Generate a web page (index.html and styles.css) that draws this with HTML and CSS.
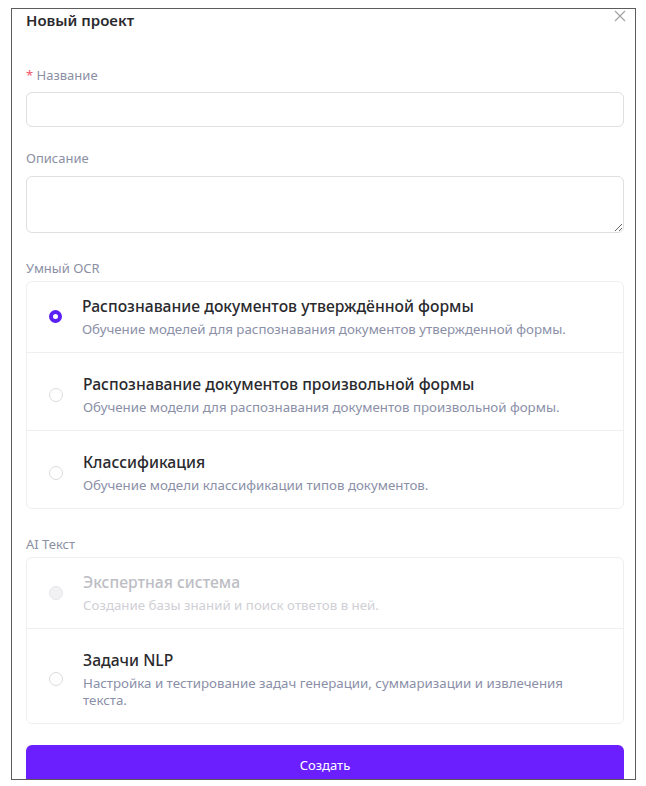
FILE: index.html
```html
<!DOCTYPE html>
<html lang="ru">
<head>
    <meta charset="UTF-8">
    <title>Новый проект</title>
    <link rel="stylesheet" href="styles.css">
</head>
<body>
    <div class="dialog">
        <h1 class="dialog-title">Новый проект</h1>
        <button class="close" type="button" aria-label="Закрыть">
            <svg width="12" height="12" viewBox="0 0 12 12"><path d="M1 1L11 11M11 1L1 11" stroke="#a3a3a3" stroke-width="1.2" fill="none"/></svg>
        </button>

        <div class="field field-name">
            <label class="field-label"><span class="req">*</span> Название</label>
            <input class="input" type="text">
        </div>
        <div class="field field-desc">
            <label class="field-label">Описание</label>
            <textarea class="input textarea"></textarea>
        </div>

        <div class="group">
            <div class="field-label">Умный OCR</div>
            <div class="options">
                <label class="option">
                    <span class="radio checked"></span>
                    <span class="option-text">
                        <span class="option-title">Распознавание документов утверждённой формы</span>
                        <span class="option-desc">Обучение моделей для распознавания документов утвержденной формы.</span>
                    </span>
                </label>
                <label class="option">
                    <span class="radio"></span>
                    <span class="option-text">
                        <span class="option-title">Распознавание документов произвольной формы</span>
                        <span class="option-desc">Обучение модели для распознавания документов произвольной формы.</span>
                    </span>
                </label>
                <label class="option">
                    <span class="radio"></span>
                    <span class="option-text">
                        <span class="option-title">Классификация</span>
                        <span class="option-desc">Обучение модели классификации типов документов.</span>
                    </span>
                </label>
            </div>
        </div>

        <div class="group">
            <div class="field-label">AI Текст</div>
            <div class="options">
                <label class="option disabled">
                    <span class="radio"></span>
                    <span class="option-text">
                        <span class="option-title">Экспертная система</span>
                        <span class="option-desc">Создание базы знаний и поиск ответов в ней.</span>
                    </span>
                </label>
                <label class="option">
                    <span class="radio"></span>
                    <span class="option-text">
                        <span class="option-title">Задачи NLP</span>
                        <span class="option-desc">Настройка и тестирование задач генерации, суммаризации и извлечения текста.</span>
                    </span>
                </label>
            </div>
        </div>

        <button class="create" type="button">Создать</button>
    </div>
</body>
</html>
```

FILE: styles.css
```css
body {
    margin: 0;
    background: #ffffff;
    font-family: "Noto Sans", "Open Sans", Arial, sans-serif;
    color: #2a2a2e;
}
.dialog {
    position: relative;
    box-sizing: border-box;
    width: 625px;
    height: 772px;
    margin: 8px 0 0 11px;
    padding: 0 11px 0 14px;
    border: 1px solid #5c5c5c;
    overflow: hidden;
}
.dialog-title {
    margin: 0;
    font-size: 15px;
    line-height: 22px;
    font-weight: 600;
    color: #2a2a2e;
}
.close {
    position: absolute;
    top: 1px;
    right: 9px;
    padding: 0;
    border: none;
    background: none;
    line-height: 0;
}
.field-label {
    display: block;
    font-size: 13px;
    line-height: 20px;
    color: #8b8fa3;
}
.req {
    color: #f0566a;
}
.field-name {
    margin-top: 34px;
}
.field-desc {
    margin-top: 21px;
}
.input {
    display: block;
    box-sizing: border-box;
    width: 100%;
    height: 35px;
    margin-top: 7px;
    border: 1px solid #dedee3;
    border-radius: 6px;
    font-family: inherit;
    font-size: 13px;
    outline: none;
}
.textarea {
    height: 57px;
    margin-top: 8px;
    resize: vertical;
}
.group {
    margin-top: 25px;
}
.options {
    margin-top: 3px;
    border: 1px solid #efeff2;
    border-radius: 6px;
}
.option {
    display: flex;
    align-items: center;
    gap: 20px;
    padding: 20px 30px 14px 22px;
    border-top: 1px solid #efeff2;
}
.option:first-child {
    padding-top: 13px;
    border-top: none;
}
.radio {
    flex: none;
    box-sizing: border-box;
    width: 14px;
    height: 14px;
    border: 1px solid #dcdce0;
    border-radius: 50%;
    background: #ffffff;
}
.radio.checked {
    width: 13px;
    height: 13px;
    border: 4px solid #5a1ff5;
}
.option-text {
    display: flex;
    flex-direction: column;
}
.option-title {
    font-size: 15.7px;
    line-height: 22px;
    font-weight: 500;
    color: #2a2a2e;
}
.option-desc {
    margin-top: 4px;
    font-size: 13.3px;
    line-height: 17px;
    color: #8b8fa8;
}
.option.disabled .option-title {
    color: #bdbdc4;
}
.option.disabled .option-desc {
    color: #cfd0d6;
}
.option.disabled .radio {
    background: #f1f1f3;
    border-color: #e6e6ea;
}
.create {
    display: block;
    width: 100%;
    height: 40px;
    margin-top: 21px;
    border: none;
    border-radius: 6px;
    background: #6b1fff;
    color: #ffffff;
    font-family: inherit;
    font-size: 13px;
}
```
